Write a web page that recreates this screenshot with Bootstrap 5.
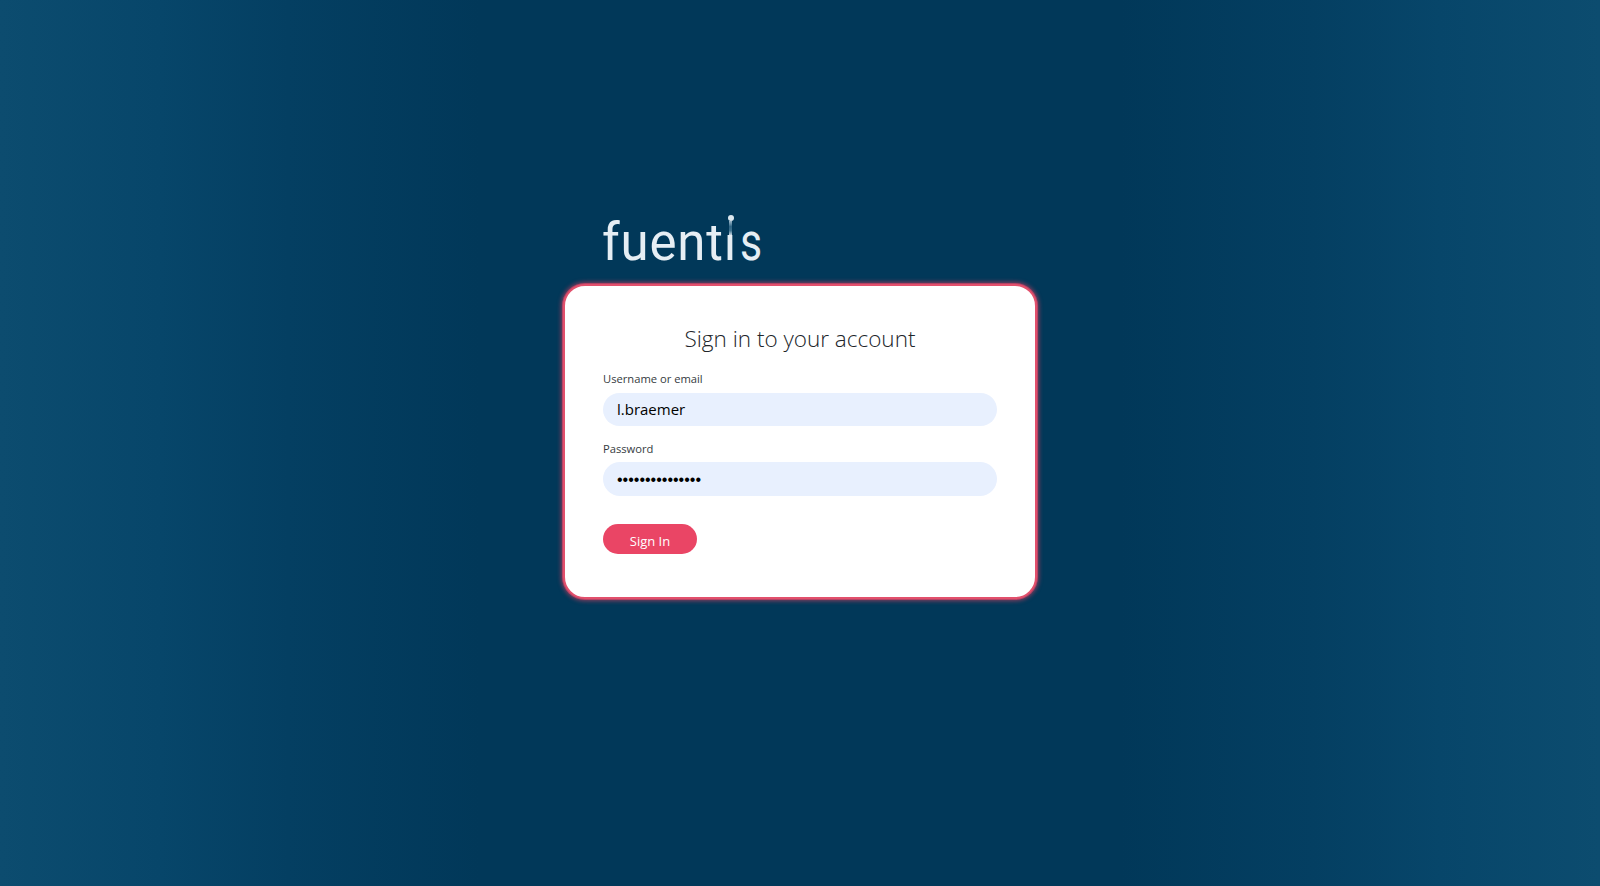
<!DOCTYPE html>
<html lang="en">
<head>
<meta charset="utf-8">
<title>Sign in</title>
<link href="https://cdn.jsdelivr.net/npm/bootstrap@5.3.0/dist/css/bootstrap.min.css" rel="stylesheet">
<style>
html,body{height:100%}
body{font-family:"Open Sans","Noto Sans",sans-serif;background:linear-gradient(90deg,#0c4c6f 0%,#07466a 10%,#043f62 18%,#013859 30%,#013859 70%,#043f62 82%,#07466a 90%,#0c4c6f 100%);}
.login-wrap{width:474px;height:886px;padding-top:211px}
.brand-row{height:73px;padding:4px 0 0 39px}
.brand-name{position:relative;display:inline-block;font-family:"Roboto","Noto Sans",sans-serif;font-weight:400;font-size:51px;line-height:56px;color:#e6eef4;white-space:nowrap}
.brand-head{letter-spacing:.8px}
.brand-tail{display:inline-block;transform:scaleX(.84);transform-origin:left center;margin-left:3px}
.brand-stem{position:absolute;left:125px;top:6px;width:7px;height:14px;background:#013859}
.brand-stem::before{content:"";position:absolute;left:.5px;top:-6px;width:6px;height:6px;border-radius:50%;background:#dbe7ef}
.brand-stem::after{content:"";position:absolute;left:2px;top:0;width:3px;height:14px;background:linear-gradient(180deg,#9db8c9 0,#2f6483 40%,#3f7390 70%,#c9d8e3 100%)}
.login-panel{height:315px;background:#fff;border:2px solid #e2506c;border-radius:22px;box-shadow:0 0 0 1px rgba(212,70,106,.7),0 0 4px 2px rgba(222,65,97,.6);padding:37px 38px 0}
.panel-title{font-weight:300;font-size:22.5px;line-height:32px;text-align:center;color:#212529;margin-bottom:16px}
.field-label{display:block;font-size:11.2px;line-height:16px;color:#343a40;margin-bottom:6px}
.field-input{display:block;width:100%;height:33px;border:0;border-radius:17px;background:#e8f0fe;padding:0 14px 1px;font-size:15px;color:#000;outline:0;margin-bottom:15px}
.label-tight{margin-bottom:5px}
.field-input[type=password]{font-family:"Liberation Sans",sans-serif;font-size:16px;height:34px;padding:1px 14px 0}
.submit-btn{display:block;width:94px;height:30px;margin-top:28px;border-radius:15px;background:#ea4565;color:#fff;font-size:13px;line-height:30px;padding:2px 0 0;border:0}
</style>
</head>
<body class="d-flex justify-content-center m-0">
<main class="login-wrap">
  <div class="brand-row d-flex align-items-start"><span class="brand-name"><span class="brand-head">fuenti</span><span class="brand-tail">s</span><span class="brand-stem"></span></span></div>
  <form class="login-panel">
    <h1 class="panel-title">Sign in to your account</h1>
    <label class="field-label" for="u">Username or email</label>
    <input class="field-input" id="u" type="text" value="l.braemer">
    <label class="field-label label-tight" for="p">Password</label>
    <input class="field-input" id="p" type="password" value="aaaaaaaaaaaaaaa">
    <button class="btn submit-btn" type="button">Sign In</button>
  </form>
</main>
<script src="https://cdn.jsdelivr.net/npm/bootstrap@5.3.0/dist/js/bootstrap.bundle.min.js"></script>
</body>
</html>
